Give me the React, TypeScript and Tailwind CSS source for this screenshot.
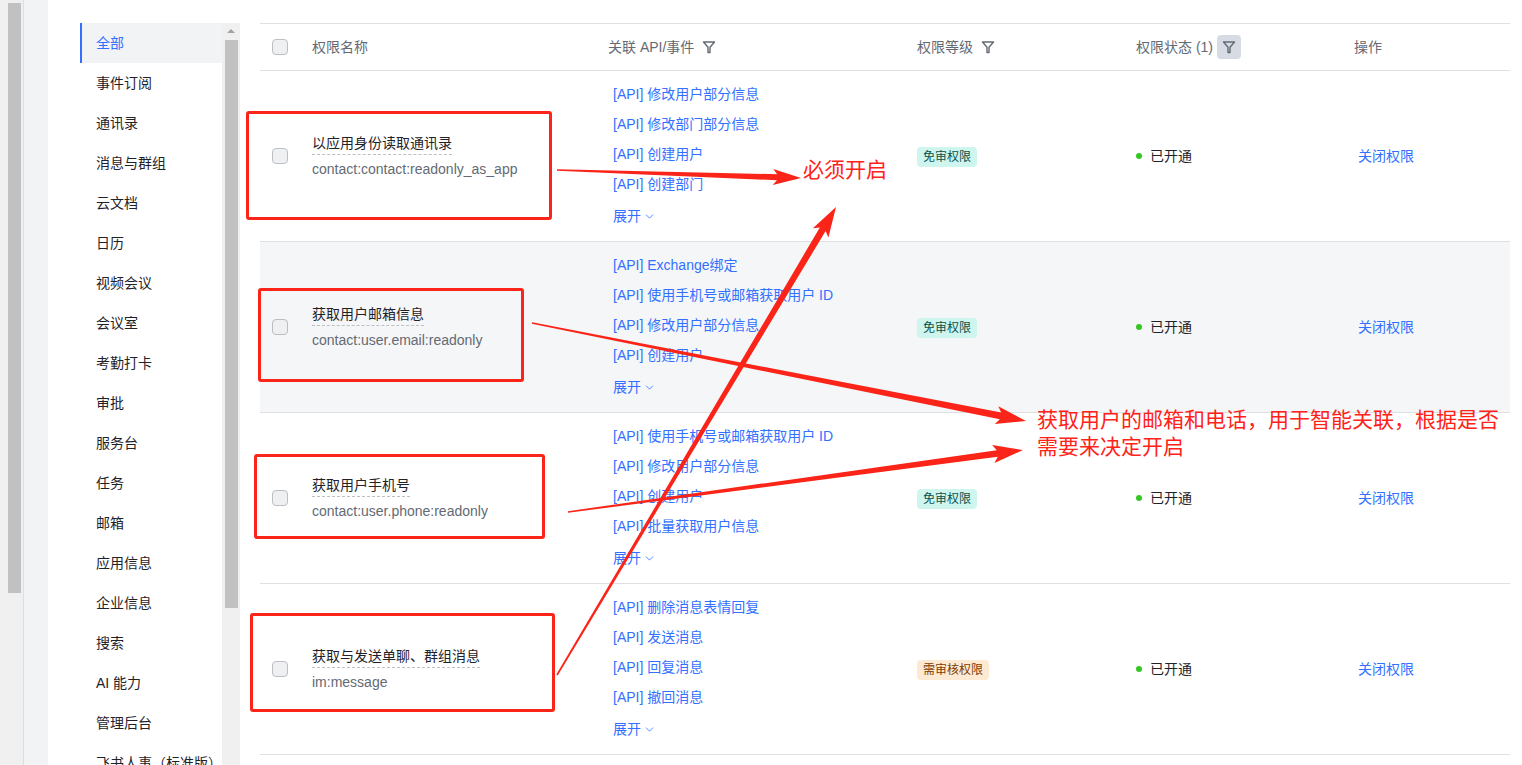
import React from 'react';
import { ChevronDown } from 'lucide-react';

const FONT = { fontFamily: '"Liberation Sans", "Noto Sans CJK SC", sans-serif' };

const navItems = [
  '全部', '事件订阅', '通讯录', '消息与群组', '云文档', '日历', '视频会议', '会议室', '考勤打卡',
  '审批', '服务台', '任务', '邮箱', '应用信息', '企业信息', '搜索', 'AI 能力', '管理后台', '飞书人事（标准版）',
];

type Row = {
  name: string;
  code: string;
  apis: string[];
  level: 'free' | 'review';
  hover?: boolean;
};

const rows: Row[] = [
  {
    name: '以应用身份读取通讯录',
    code: 'contact:contact:readonly_as_app',
    apis: ['[API] 修改用户部分信息', '[API] 修改部门部分信息', '[API] 创建用户', '[API] 创建部门'],
    level: 'free',
  },
  {
    name: '获取用户邮箱信息',
    code: 'contact:user.email:readonly',
    apis: ['[API] Exchange绑定', '[API] 使用手机号或邮箱获取用户 ID', '[API] 修改用户部分信息', '[API] 创建用户'],
    level: 'free',
    hover: true,
  },
  {
    name: '获取用户手机号',
    code: 'contact:user.phone:readonly',
    apis: ['[API] 使用手机号或邮箱获取用户 ID', '[API] 修改用户部分信息', '[API] 创建用户', '[API] 批量获取用户信息'],
    level: 'free',
  },
  {
    name: '获取与发送单聊、群组消息',
    code: 'im:message',
    apis: ['[API] 删除消息表情回复', '[API] 发送消息', '[API] 回复消息', '[API] 撤回消息'],
    level: 'review',
  },
];

const FilterIcon = () => (
  <svg width="14" height="14" viewBox="0 0 14 14" fill="none" stroke="#646a73" strokeWidth="1.4" strokeLinejoin="round">
    <path d="M1.5 2h11L8 7.2V12.5H6V7.2z" />
  </svg>
);

const Checkbox = () => (
  <div className="w-4 h-4 rounded-[4px] border border-[#bbbfc4] bg-[#eff0f1]" />
);

// tapered red arrow, thin at the tail and thick near the head
function arrowPoints(sx: number, sy: number, tx: number, ty: number, w0 = 0.6, w1 = 3, L = 26, H = 8) {
  const dx = tx - sx;
  const dy = ty - sy;
  const len = Math.hypot(dx, dy);
  const ux = dx / len;
  const uy = dy / len;
  const nx = -uy;
  const ny = ux;
  const bx = tx - ux * L;
  const by = ty - uy * L;
  const nb = (x: number, y: number) => `${x.toFixed(1)},${y.toFixed(1)}`;
  return [
    nb(sx + nx * w0, sy + ny * w0),
    nb(bx + ux * 4 + nx * w1, by + uy * 4 + ny * w1),
    nb(bx + nx * H, by + ny * H),
    nb(tx, ty),
    nb(bx - nx * H, by - ny * H),
    nb(bx + ux * 4 - nx * w1, by + uy * 4 - ny * w1),
    nb(sx - nx * w0, sy - ny * w0),
  ].join(' ');
}

const Annotations = () => (
  <div className="absolute inset-0 pointer-events-none">
    {/* boxes */}
    <div className="absolute left-[246px] top-[111px] w-[306px] h-[109px] border-[3px] border-[#fa2418] rounded-[3px]" />
    <div className="absolute left-[258px] top-[288px] w-[266px] h-[94px] border-[3px] border-[#fa2418] rounded-[3px]" />
    <div className="absolute left-[254px] top-[454px] w-[291px] h-[85px] border-[3px] border-[#fa2418] rounded-[3px]" />
    <div className="absolute left-[250px] top-[613px] w-[305px] h-[99px] border-[3px] border-[#fa2418] rounded-[3px]" />

    <svg className="absolute left-0 top-0" width="1522" height="765" viewBox="0 0 1522 765">
      <g fill="#fa2418">
        <polygon points={arrowPoints(557, 170, 801, 178, 0.8, 3, 28, 8)} />
        <polygon points={arrowPoints(532, 323, 1026, 421, 0.8, 3.4, 30, 9)} />
        <polygon points={arrowPoints(568, 512, 1023, 450, 0.8, 3.2, 30, 9)} />
        <polygon points={arrowPoints(557, 675, 836, 207, 0.8, 3.4, 30, 9)} />
      </g>
    </svg>

    <div className="absolute left-[803px] top-[157px] text-[21px] leading-[26px] text-[#ff2218]" style={FONT}>
      必须开启
    </div>
    <div className="absolute left-[1037px] top-[406px] w-[480px] text-[21px] leading-[27px] text-[#ff2218]" style={FONT}>
      获取用户的邮箱和电话，用于智能关联，根据是否<br />需要来决定开启
    </div>
  </div>
);

export default function App() {
  return (
    <div className="relative w-[1522px] h-[765px] overflow-hidden bg-white flex text-[14px]" style={FONT}>
      {/* outer scrollbar */}
      <div className="w-[23px] bg-[#f0f0f0] pl-[8px] pr-[2px] pt-[3px]">
        <div className="w-[13px] h-[590px] bg-[#c1c1c1]" />
      </div>
      <div className="w-px bg-[#dedede]" />
      <div className="w-[24px] bg-[#f2f3f5]" />
      <div className="w-[32px]" />

      {/* category nav */}
      <div className="w-[142px] pt-[23px]">
        {navItems.map((item, i) => (
          <div
            key={item}
            className={`h-10 flex items-center pl-4 whitespace-nowrap ${
              i === 0 ? 'bg-[#f2f3f5] text-[#3370ff] border-l-2 border-[#3370ff] pl-[14px]' : 'text-[#1f2329]'
            }`}
          >
            {item}
          </div>
        ))}
      </div>

      {/* nav scrollbar */}
      <div className="mt-[23px] w-[18px] bg-[#f0f0f0] flex flex-col items-center">
        <div className="mt-[6px] w-0 h-0 border-l-[4px] border-r-[4px] border-b-[4px] border-l-transparent border-r-transparent border-b-[#a3a3a3]" />
        <div className="mt-[7px] w-[13px] h-[568px] bg-[#c1c1c1]" />
      </div>

      <div className="w-[20px]" />

      {/* table */}
      <div className="w-[1250px] pt-[23px]">
        <div className="grid grid-cols-[52px_296px_309px_219px_218px_1fr] h-[48px] items-center border-y border-[#dee0e3] text-[#646a73]">
          <div className="pl-3"><Checkbox /></div>
          <div>权限名称</div>
          <div className="flex items-center gap-[8px]">关联 API/事件 <FilterIcon /></div>
          <div className="flex items-center gap-[8px]">权限等级 <FilterIcon /></div>
          <div className="flex items-center gap-[4px]">
            权限状态 (1)
            <span className="w-6 h-6 rounded-[4px] bg-[#d7dbe4] flex items-center justify-center"><FilterIcon /></span>
          </div>
          <div>操作</div>
        </div>

        {rows.map((r) => (
          <div
            key={r.name}
            className={`grid grid-cols-[52px_296px_309px_219px_218px_1fr] h-[171px] items-center border-b border-[#dee0e3] ${
              r.hover ? 'bg-[#f5f6f7]' : ''
            }`}
          >
            <div className="pl-3"><Checkbox /></div>
            <div className="flex flex-col items-start">
              <span className="text-[#1f2329] leading-[22px] border-b border-dashed border-[#bbbfc4]">{r.name}</span>
              <span className="text-[#646a73] leading-[22px] mt-[3px]">{r.code}</span>
            </div>
            <div className="self-start pt-[8px] pl-[5px] text-[#3370ff]">
              {r.apis.map((a) => (
                <div key={a} className="h-[30px] leading-[30px] whitespace-nowrap">{a}</div>
              ))}
              <div className="h-[30px] mt-[2px] flex items-center gap-[2px]">
                展开 <ChevronDown size={13} strokeWidth={1.5} />
              </div>
            </div>
            <div>
              {r.level === 'free' ? (
                <span className="inline-block px-[6px] h-5 leading-5 rounded-[4px] text-[12px] bg-[#cff5ef] text-[#0b5149]">免审权限</span>
              ) : (
                <span className="inline-block px-[6px] h-5 leading-5 rounded-[4px] text-[12px] bg-[#feead2] text-[#7c3b06]">需审核权限</span>
              )}
            </div>
            <div className="flex items-center gap-[8px] text-[#1f2329]">
              <span className="w-[6px] h-[6px] rounded-full bg-[#34c724]" />
              已开通
            </div>
            <div className="pl-[4px] text-[#3370ff]">关闭权限</div>
          </div>
        ))}
      </div>

      <Annotations />
    </div>
  );
}
